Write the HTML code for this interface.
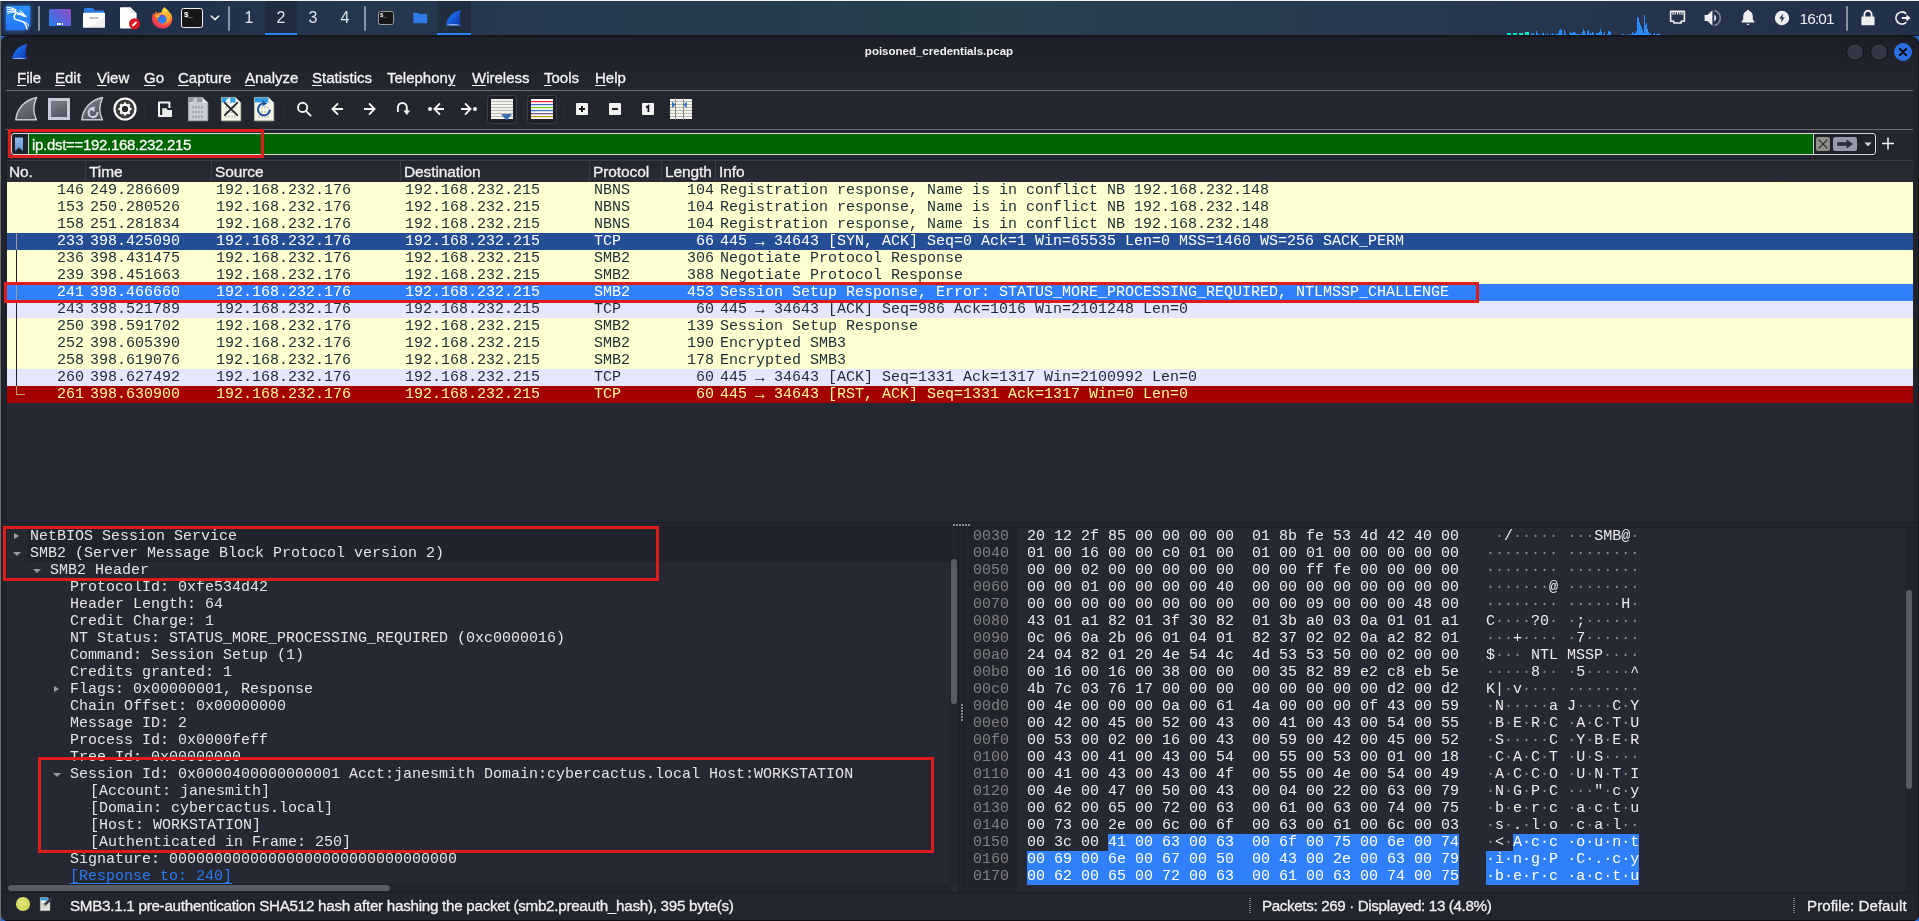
<!DOCTYPE html>
<html><head><meta charset="utf-8"><title>poisoned_credentials.pcap</title>
<style>
*{box-sizing:border-box;margin:0;padding:0}
html,body{width:1919px;height:921px;overflow:hidden;background:#1f212b}
body{position:relative;font-family:"Liberation Sans",sans-serif;color:#e6e6e6;font-size:15px}
.abs{position:absolute}
#topline{position:absolute;left:0;top:0;width:1919px;height:1px;background:#f2f2f2}
#panel{position:absolute;left:0;top:1px;width:1919px;height:34px;background:linear-gradient(90deg,#1f2d48 0%,#263850 24.5%,#253f4b 49.95%,#29424f 50.05%,#27364f 78.7%,#222f49 100%)}
#pshadow{position:absolute;left:0;top:35px;width:1919px;height:2px;background:#14151b}
#leftedge{position:absolute;left:0;top:1px;width:1px;height:920px;background:#6e6e6e}
#win{position:absolute;left:1px;top:37px;width:1917px;height:884px;background:linear-gradient(180deg,#1d1f28 0px,#22242e 40px,#23252f 54px,#23252f 100%)}
#rightedge{position:absolute;left:1918px;top:37px;width:1px;height:884px;background:#14151b}
.ws{position:absolute;top:7px;width:32px;height:22px;line-height:22px;text-align:center;font-size:16px;color:#dfe3ea}
/* title */
#title{position:absolute;left:0;top:37px;width:1878px;height:29px;line-height:29px;text-align:center;font-size:11.5px;font-weight:bold;color:#f2f2f2;letter-spacing:0}
.wb{position:absolute;top:43px;width:18px;height:18px;border-radius:50%;background:#333645;border:1.5px solid #0e0f14}
/* menu */
.mi{position:absolute;top:68px;height:20px;line-height:20px;font-size:15px;color:#f4f4f4;white-space:nowrap;-webkit-text-stroke:0.3px #f4f4f4}
.mi u{text-decoration:underline;text-underline-offset:2px;text-decoration-thickness:1px}
#menuline{position:absolute;left:6px;top:90px;width:1907px;height:1px;background:#6c6e78}
#tbline{position:absolute;left:6px;top:129px;width:1907px;height:1px;background:#6c6e78}
/* filter */
#fbox{position:absolute;left:11px;top:133px;width:1865px;height:22px;border:1px solid #d8d8d8;border-radius:3px;background:#20222c;overflow:hidden}
#fgreen{position:absolute;left:17px;top:0;width:1785px;height:20px;background:#006400;border-right:1px solid #cfcfcf}
#ftext{position:absolute;left:32px;top:135px;height:20px;line-height:20px;font-size:15px;color:#f8f8f8;white-space:nowrap;letter-spacing:-0.3px;-webkit-text-stroke:0.3px #f8f8f8}
/* packet list */
#plhead{position:absolute;left:7px;top:160px;width:1906px;height:22px;background:linear-gradient(#242630,#292b36);border-top:1px solid #3a3c47}
.hc{position:absolute;top:162px;height:20px;line-height:20px;font-size:15.5px;color:#f0f0f0;white-space:nowrap;letter-spacing:-0.1px;-webkit-text-stroke:0.3px #f0f0f0}
.hd{position:absolute;top:161px;width:1px;height:20px;background:#3b3d48}
#plbody{position:absolute;left:7px;top:182px;width:1906px;height:340px;background:#262833}
.pr{position:absolute;left:7px;width:1906px;height:17px;font-family:"Liberation Mono",monospace;font-size:15px;line-height:17px;white-space:pre}
.pr .c{position:absolute;top:0;height:17px}
.pr.y{background:#feffd0;color:#1c2b36}
.pr.t{background:#e7e6ff;color:#1c2b36}
.pr.b{background:#244f97;color:#ffffff}
.pr.s{background:#3080fc;color:#ffffff}
.pr.r{background:#a40000;color:#fffc9c}
.ar{font-family:"Liberation Sans",sans-serif;font-size:16px;display:inline-block;width:9px;text-align:center;line-height:17px;vertical-align:top;position:relative;top:-1.5px;text-indent:-4px}
/* bottom panes */
#split1{position:absolute;left:1px;top:522px;width:1917px;height:6px;background:#22242e;border-top:1px solid #1c1e26;border-bottom:1px solid #1c1e26}
#tree{position:absolute;left:7px;top:528px;width:951px;height:364px;background:#262833;overflow:hidden}
#hexp{position:absolute;left:964px;top:528px;width:949px;height:364px;background:#262833;overflow:hidden}
#hexoff{position:absolute;left:964px;top:528px;width:54px;height:364px;background:#21232d}
.tt{position:absolute;height:17px;line-height:17px;font-family:"Liberation Mono",monospace;font-size:15px;color:#e4e4e4;white-space:pre}
.tt.lnk{color:#2a7bef;text-decoration:underline;text-underline-offset:3px;text-decoration-thickness:1px;text-decoration-skip-ink:none}
.tdk{position:absolute;left:27px;width:931px;height:17px;background:#21232d}
.ar-r{position:absolute;width:0;height:0;border-left:5px solid #a0a0a0;border-top:3.9px solid transparent;border-bottom:3.9px solid transparent;margin-top:-0.4px}
.ar-d{position:absolute;width:0;height:0;border-top:4px solid #9a9a9a;border-left:4px solid transparent;border-right:4px solid transparent}
.hr{position:absolute;left:964px;width:949px;height:17px;font-family:"Liberation Mono",monospace;font-size:15px;line-height:17px;white-space:pre}
.ho{position:absolute;left:9px;color:#808080}
.hb{position:absolute;left:63px;color:#ececec}
.ha{position:absolute;left:522px;color:#ececec}
.d{color:#8e8e8e}
.hs .d{color:#fff}
.hs{background:#3080fc;color:#fff;display:inline-block;height:17px}
.redbox{position:absolute;border:3px solid #e01b1b}
.sb{position:absolute;background:#5b5c63;border-radius:3px}
/* status */
#status{position:absolute;left:1px;top:892px;width:1917px;height:29px;background:#22242e;border-top:1px solid #1b1d24;border-bottom:1px solid #0e0f13}
.st{position:absolute;top:896px;height:20px;line-height:20px;font-size:15.2px;color:#f0f0f0;white-space:nowrap;-webkit-text-stroke:0.3px #f0f0f0}
.vdot{position:absolute;top:898px;width:2px;height:15px;background:repeating-linear-gradient(180deg,#70727a 0 1px,transparent 1px 2px)}
#L{position:absolute;left:0;top:0;width:1919px;height:921px;will-change:transform}
</style></head><body><div id="L">
<div id="topline"></div>
<div id="panel"></div>
<div id="pshadow"></div>
<div id="win"></div>
<div class="abs" style="left:1px;top:92px;width:6px;height:800px;background:#20222c"></div><div class="abs" style="left:1913px;top:92px;width:5px;height:800px;background:#20222c"></div>
<div id="leftedge"></div>
<div id="rightedge"></div>

<!-- PANEL ICONS -->
<!-- kali menu -->
<div class="abs" style="left:6px;top:6px;width:24px;height:24px;border-radius:1px 1px 7px 1px;background:linear-gradient(180deg,#2b93ff,#2377f2);box-shadow:0 0 3.5px 1px rgba(40,130,255,.7)"></div>
<svg class="abs" style="left:6px;top:6px" width="24" height="24" viewBox="0 0 24 24" fill="none" stroke="#fff" stroke-linecap="round">
<path d="M1 1.2 C4 1.4 7 2 9.5 3.6" stroke-width="1.1"/>
<path d="M1.2 3.4 C4 3 6.5 3.4 9.5 4.6" stroke-width="1.1"/>
<path d="M1.4 5.6 C4 4.8 6.5 4.8 9.5 5.4" stroke-width="1.1"/>
<path d="M2 7.4 C4.5 6.2 7 5.8 9.6 6.2" stroke-width="1"/>
<path d="M9.4 3.4 C9.8 5.5 10 6.5 9.8 7.4 C7.6 9.6 7.4 12.4 10 13.6 C13 14.8 17.5 14.6 19.6 18.6 C20.4 20.2 20.8 21.6 21 23" stroke-width="1.5"/>
<path d="M9.8 7.4 C12 6.6 14.6 6.8 16.6 8 L20.4 10.6 L17.8 10.2 C16 8.8 14 8.2 12 8.6" stroke-width="1.1" fill="#fff"/>
<path d="M14 4.4 C15.6 5.4 17 6.6 18 8.2" stroke-width="1"/>
<path d="M17.6 15.6 C20.4 16.4 22.2 18 22.8 20" stroke-width="1"/>
</svg>
<div class="abs" style="left:38px;top:6px;width:2px;height:25px;background:#8a92a4;border-radius:1px"></div>
<!-- show desktop -->
<div class="abs" style="left:49px;top:9px;width:22px;height:17px;border-radius:1.5px;background:linear-gradient(45deg,#2d7dec 10%,#5a63d8 50%,#9350c6 95%)"></div>
<div class="abs" style="left:57px;top:23px;width:1.6px;height:1.6px;background:#fff"></div><div class="abs" style="left:59.3px;top:23px;width:1.6px;height:1.6px;background:#fff"></div><div class="abs" style="left:61.6px;top:23px;width:1.6px;height:1.6px;background:#fff"></div>
<!-- file manager -->
<svg class="abs" style="left:82px;top:7px" width="24" height="22" viewBox="0 0 24 22">
<path d="M2 2.2 Q2 1 3.2 1 H10.4 Q11.4 1 11.8 2 L12.4 3.6 H21 Q22 3.6 22 4.6 V7 H2 Z" fill="#2b7be9"/>
<defs><linearGradient id="fg1" x1="0" y1="0" x2="1" y2="1"><stop offset="0.62" stop-color="#ffffff"/><stop offset="0.63" stop-color="#f1f1f1"/></linearGradient></defs>
<rect x="1" y="5.8" width="22" height="15" rx="0.8" fill="url(#fg1)"/>
<rect x="7" y="10" width="10" height="2" rx="1" fill="#c4c4c4"/>
</svg>
<!-- text editor -->
<svg class="abs" style="left:118px;top:6px" width="24" height="25" viewBox="0 0 24 25">
<defs><linearGradient id="pg1" x1="0" y1="1" x2="1" y2="0"><stop offset="0" stop-color="#f4f4f4"/><stop offset="1" stop-color="#c8c8c8"/></linearGradient></defs>
<path d="M2 2 Q2 1.2 2.8 1.2 H12.4 L18.6 7.4 V21.6 Q18.6 22.4 17.8 22.4 H2.8 Q2 22.4 2 21.6 Z" fill="#ffffff"/>
<path d="M12.4 1.2 L18.6 7.4 H13.4 Q12.4 7.4 12.4 6.4 Z" fill="url(#pg1)"/>
<circle cx="16.6" cy="17.8" r="5.6" fill="#d8191f"/>
<path d="M14 20.4 L14.5 18.6 L17.9 15.2 L19.2 16.5 L15.8 19.9 Z" fill="#fff"/>
</svg>
<!-- firefox -->
<svg class="abs" style="left:150px;top:6px" width="24" height="24" viewBox="0 0 24 24">
<defs>
<radialGradient id="ff1" cx="0.7" cy="0.15" r="0.95"><stop offset="0" stop-color="#ffe24a"/><stop offset="0.35" stop-color="#ffa62a"/><stop offset="0.65" stop-color="#ff5a36"/><stop offset="1" stop-color="#e3256b"/></radialGradient>
<linearGradient id="ff2" x1="0" y1="0" x2="0" y2="1"><stop offset="0" stop-color="#6a4be0"/><stop offset="0.4" stop-color="#2f7bf0"/><stop offset="1" stop-color="#2a86f4"/></linearGradient>
</defs>
<path d="M14.6 1 C15.4 2.6 17.4 3.4 19.2 6 C21.6 7.8 22.6 10.8 22.2 13.8 C21.6 18.8 17.6 22.6 12.4 22.6 C6.6 22.6 2 18.2 2 12.6 C2 10.2 2.6 8.4 3.6 7 C3.6 7.8 4 8.6 4.4 8.8 C4.6 7.4 5.2 6.2 6.4 5.2 C6.4 6 6.8 6.8 7.6 7.2 C8.8 6.4 10.4 6.2 11.6 6.6 C11.6 4.6 12.6 2.4 14.6 1 Z" fill="url(#ff1)"/>
<circle cx="12.2" cy="13.2" r="4.4" fill="url(#ff2)"/>
<path d="M4.8 9.6 C6.4 9 8.4 9.2 10 10.2 C9 10.4 8.2 11 7.8 11.8 C6.8 11.6 5.6 10.8 4.8 9.6 Z" fill="#ffc53a"/>
<path d="M17 4.6 C19.8 7.2 20.8 10.6 19.6 14 C18.6 16.8 16 18.6 13.2 18.8 C16.2 17.6 17.8 14.8 17.2 11.8 C16.8 9.8 15.6 8.6 14 8 C15.6 7.6 16.8 6.2 17 4.6 Z" fill="#ffb02e" opacity="0.85"/>
</svg>
<!-- terminal -->
<div class="abs" style="left:181px;top:8px;width:22px;height:20px;border:1.3px solid #f2f2f2;border-radius:2.5px;background:#161616"></div>
<div class="abs" style="left:184px;top:9.5px;font-size:8px;line-height:10px;font-weight:bold;color:#fff;letter-spacing:-0.4px">$_</div>
<svg class="abs" style="left:210px;top:14px" width="10" height="8" viewBox="0 0 10 8"><path d="M1.2 2 L5 5.6 L8.8 2" fill="none" stroke="#f2f2f2" stroke-width="1.5" stroke-linecap="round" stroke-linejoin="round"/></svg>
<div class="abs" style="left:228px;top:6px;width:2px;height:25px;background:#8a92a4;border-radius:1px"></div>
<!-- workspaces -->
<div class="abs" style="left:265px;top:1px;width:32px;height:34px;background:#1f2b3e"></div>
<div class="abs" style="left:265px;top:33px;width:32px;height:2px;background:#2a84ff"></div>
<div class="ws" style="left:233px">1</div><div class="ws" style="left:265px">2</div><div class="ws" style="left:297px">3</div><div class="ws" style="left:329px">4</div>
<div class="abs" style="left:364px;top:6px;width:2px;height:25px;background:#8a92a4;border-radius:1px"></div>
<!-- tasks -->
<div class="abs" style="left:378px;top:11px;width:16px;height:14px;border:1.2px solid #9a9a9a;border-radius:2.5px;background:#151515"></div>
<div class="abs" style="left:380px;top:12px;font-size:6px;line-height:7px;font-weight:bold;color:#eee">$_</div>
<svg class="abs" style="left:413px;top:12px" width="15" height="12" viewBox="0 0 15 12"><path d="M0.2 1.6 Q0.2 0.8 1 0.8 H5 Q5.6 0.8 6 1.4 L6.4 2 H13.4 Q14.2 2 14.2 2.8 V10.4 Q14.2 11.2 13.4 11.2 H1 Q0.2 11.2 0.2 10.4 Z" fill="#2f7bea"/></svg>
<div class="abs" style="left:437px;top:1px;width:34px;height:34px;background:#1f2d3f"></div>
<div class="abs" style="left:437px;top:33px;width:34px;height:2px;background:#2a84ff"></div>
<svg class="abs" style="left:445px;top:9px" width="18" height="18" viewBox="0 0 18 18">
<defs><linearGradient id="fin1" x1="0" y1="0" x2="1" y2="1"><stop offset="0" stop-color="#2d8cff"/><stop offset="0.55" stop-color="#1658d6"/><stop offset="1" stop-color="#0a2f9c"/></linearGradient></defs>
<path d="M1 16.4 C2.2 9 7 2.6 16.2 1 C14.2 5.6 14 11 16 16.4 Z" fill="url(#fin1)"/>
<path d="M1 16.4 C5 14.6 12 14.8 16 16.4 Z" fill="#9ec0ff" opacity="0.85"/>
</svg>
<!-- cpu graph -->
<svg class="abs" style="left:1506px;top:13px" width="156" height="22" viewBox="0 0 156 22" shape-rendering="crispEdges">
<g fill="#00e6c4"><rect x="1" y="20" width="4" height="2"/><rect x="7" y="20" width="4" height="2"/><rect x="13" y="20" width="4" height="2"/><rect x="19" y="19" width="4" height="3"/></g>
<g fill="#2a8cff">
<rect x="25" y="20" width="1" height="2"/><rect x="26" y="21" width="1" height="1"/><rect x="27" y="20" width="1" height="2"/><rect x="30" y="18" width="1" height="4"/><rect x="31" y="20" width="1" height="2"/><rect x="33" y="21" width="1" height="1"/><rect x="36" y="20" width="1" height="2"/><rect x="37" y="20" width="1" height="2"/><rect x="39" y="21" width="1" height="1"/><rect x="41" y="20" width="1" height="2"/><rect x="44" y="21" width="1" height="1"/><rect x="46" y="20" width="1" height="2"/><rect x="48" y="21" width="1" height="1"/><rect x="50" y="21" width="1" height="1"/><rect x="51" y="21" width="1" height="1"/><rect x="52" y="20" width="1" height="2"/><rect x="53" y="17" width="1" height="5"/><rect x="54" y="16" width="1" height="6"/><rect x="55" y="17" width="1" height="5"/><rect x="56" y="21" width="1" height="1"/><rect x="58" y="17" width="1" height="5"/><rect x="59" y="20" width="1" height="2"/><rect x="63" y="21" width="1" height="1"/><rect x="64" y="19" width="1" height="3"/><rect x="65" y="20" width="1" height="2"/><rect x="66" y="20" width="1" height="2"/><rect x="67" y="19" width="1" height="3"/><rect x="68" y="19" width="1" height="3"/><rect x="69" y="20" width="1" height="2"/><rect x="70" y="21" width="1" height="1"/><rect x="71" y="21" width="1" height="1"/><rect x="72" y="21" width="1" height="1"/><rect x="73" y="21" width="1" height="1"/><rect x="75" y="21" width="1" height="1"/><rect x="76" y="19" width="1" height="3"/><rect x="77" y="16" width="1" height="6"/><rect x="78" y="18" width="1" height="4"/><rect x="79" y="21" width="1" height="1"/><rect x="81" y="18" width="1" height="4"/><rect x="82" y="17" width="1" height="5"/><rect x="83" y="21" width="1" height="1"/><rect x="84" y="20" width="1" height="2"/><rect x="85" y="21" width="1" height="1"/><rect x="86" y="19" width="1" height="3"/><rect x="87" y="20" width="1" height="2"/><rect x="90" y="20" width="1" height="2"/><rect x="91" y="20" width="1" height="2"/><rect x="92" y="20" width="1" height="2"/><rect x="93" y="19" width="1" height="3"/><rect x="94" y="16" width="1" height="6"/><rect x="95" y="19" width="1" height="3"/><rect x="97" y="21" width="1" height="1"/><rect x="98" y="19" width="1" height="3"/><rect x="101" y="21" width="1" height="1"/><rect x="102" y="18" width="1" height="4"/><rect x="103" y="18" width="1" height="4"/><rect x="104" y="19" width="1" height="3"/><rect x="116" y="21" width="1" height="1"/><rect x="117" y="21" width="1" height="1"/><rect x="121" y="21" width="1" height="1"/><rect x="123" y="21" width="1" height="1"/><rect x="125" y="21" width="1" height="1"/><rect x="126" y="19" width="1" height="3"/><rect x="127" y="21" width="1" height="1"/><rect x="128" y="20" width="1" height="2"/><rect x="129" y="20" width="1" height="2"/><rect x="130" y="18" width="1" height="4"/><rect x="131" y="4" width="1" height="18"/><rect x="132" y="5" width="1" height="17"/><rect x="133" y="9" width="1" height="13"/><rect x="134" y="12" width="1" height="10"/><rect x="135" y="14" width="1" height="8"/><rect x="136" y="17" width="1" height="5"/><rect x="137" y="20" width="1" height="2"/><rect x="138" y="2" width="1" height="20"/><rect x="139" y="12" width="1" height="10"/><rect x="140" y="10" width="1" height="12"/><rect x="141" y="16" width="1" height="6"/><rect x="142" y="19" width="1" height="3"/><rect x="143" y="21" width="1" height="1"/><rect x="144" y="20" width="1" height="2"/><rect x="147" y="21" width="1" height="1"/><rect x="148" y="20" width="1" height="2"/><rect x="150" y="21" width="1" height="1"/><rect x="151" y="21" width="1" height="1"/><rect x="152" y="21" width="1" height="1"/><rect x="153" y="20" width="1" height="2"/>
</g>
</svg>
<!-- tray -->
<svg class="abs" style="left:1669px;top:10px" width="17" height="15" viewBox="0 0 17 15"><path d="M1.6 1.4 H15.4 V11.2 H12.2 V13 H4.8 V11.2 H1.6 Z" fill="none" stroke="#efefef" stroke-width="1.6" stroke-linejoin="round"/><path d="M4 2 V5 M6.2 2 V4.4 M8.5 2 V4.4 M10.8 2 V4.4 M13 2 V5" stroke="#efefef" stroke-width="1.1"/></svg>
<svg class="abs" style="left:1703px;top:9px" width="20" height="18" viewBox="0 0 20 18"><path d="M1.6 6 H4.4 L9.4 1.2 V16.8 L4.4 12 H1.6 Z" fill="#efefef"/><path d="M11.2 5.6 A4 4 0 0 1 11.2 12.4 Z" fill="#efefef"/><path d="M11.4 1.6 A7.6 7.6 0 0 1 11.4 16.4" fill="none" stroke="#7f8798" stroke-width="1.6"/></svg>
<svg class="abs" style="left:1740px;top:9px" width="16" height="17" viewBox="0 0 16 17"><path d="M8 0.8 C8.8 0.8 9.2 1.4 9.2 2 C11.6 2.6 12.8 4.8 12.8 7.4 V10.6 L14.6 13 V13.6 H1.4 V13 L3.2 10.6 V7.4 C3.2 4.8 4.4 2.6 6.8 2 C6.8 1.4 7.2 0.8 8 0.8 Z" fill="#efefef"/><path d="M6.4 14.8 H9.6 Q9.2 16 8 16 Q6.8 16 6.4 14.8 Z" fill="#efefef"/></svg>
<svg class="abs" style="left:1774px;top:10px" width="16" height="16" viewBox="0 0 16 16"><circle cx="8" cy="8" r="7.2" fill="#efefef"/><path d="M9.2 3.4 L5.2 8.6 H7.6 L6.8 12.6 L10.8 7.4 H8.4 Z" fill="#26344f"/></svg>
<div class="abs" style="left:1799.5px;top:7.5px;height:22px;line-height:22px;font-size:15.4px;color:#eef0f4;letter-spacing:-0.85px;white-space:nowrap">16:01</div>
<div class="abs" style="left:1846px;top:6px;width:2px;height:25px;background:#8a92a4;border-radius:1px"></div>
<svg class="abs" style="left:1860px;top:9px" width="16" height="17" viewBox="0 0 16 17"><path d="M4.4 8 V5.4 A3.6 3.6 0 0 1 11.6 5.4 V8" fill="none" stroke="#efefef" stroke-width="1.9"/><rect x="1.4" y="7.6" width="13.2" height="8.6" rx="0.8" fill="#efefef"/></svg>
<svg class="abs" style="left:1895px;top:10px" width="17" height="16" viewBox="0 0 17 16"><path d="M10.6 3.2 A6 6 0 1 0 10.6 12.8" fill="none" stroke="#efefef" stroke-width="1.8" stroke-linecap="round"/><path d="M6.8 6.9 H11.4 V4.4 L15.6 8 L11.4 11.6 V9.1 H6.8 Z" fill="#efefef"/></svg>


<!-- title -->
<div id="title">poisoned_credentials.pcap</div>
<div class="wb" style="left:1846px"></div>
<div class="wb" style="left:1870px"></div>
<div class="wb" style="left:1894px;background:#2a6fe3;border-color:#2a6fe3"></div>
<svg class="abs" style="left:1897px;top:46px" width="12" height="12" viewBox="0 0 12 12"><path d="M2.9 2.9 L9.1 9.1 M9.1 2.9 L2.9 9.1" stroke="#08090c" stroke-width="2.1" stroke-linecap="round"/></svg>

<!-- menu -->
<div class="mi" style="left:17px"><u>F</u>ile</div>
<div class="mi" style="left:55px"><u>E</u>dit</div>
<div class="mi" style="left:97px"><u>V</u>iew</div>
<div class="mi" style="left:144px"><u>G</u>o</div>
<div class="mi" style="left:178px"><u>C</u>apture</div>
<div class="mi" style="left:245px"><u>A</u>nalyze</div>
<div class="mi" style="left:312px"><u>S</u>tatistics</div>
<div class="mi" style="left:387px">Telephon<u>y</u></div>
<div class="mi" style="left:472px"><u>W</u>ireless</div>
<div class="mi" style="left:544px"><u>T</u>ools</div>
<div class="mi" style="left:595px"><u>H</u>elp</div>
<div id="menuline"></div>

<!-- TOOLBAR -->
<svg class="abs" style="left:0;top:92px" width="720" height="36" viewBox="0 92 720 36">
<defs>
<linearGradient id="tg1" x1="0" y1="0" x2="0.4" y2="1"><stop offset="0" stop-color="#80838e"/><stop offset="1" stop-color="#555862"/></linearGradient>
<linearGradient id="tg2" x1="0" y1="0" x2="0" y2="1"><stop offset="0" stop-color="#9a9ca8"/><stop offset="1" stop-color="#8e909c"/></linearGradient>
</defs>
<!-- start capture fin -->
<path d="M15.8 119.8 C17 109 24 100 36.6 97.4 C33.2 104.6 32.8 112.6 36.4 119.8 Z" fill="url(#tg1)" stroke="#c6c9d5" stroke-width="1.5" stroke-linejoin="round"/>
<!-- stop -->
<rect x="49.5" y="99.5" width="19" height="19" fill="url(#tg1)" stroke="#c9ccd8" stroke-width="3"/>
<!-- restart fin -->
<path d="M81.8 119.8 C83 109 90 100 102.6 97.4 C99.2 104.6 98.8 112.6 102.4 119.8 Z" fill="url(#tg1)" stroke="#c6c9d5" stroke-width="1.5" stroke-linejoin="round"/>
<path d="M92.4 108.4 A4.4 4.4 0 1 0 97.4 112.2" fill="none" stroke="#cfd2de" stroke-width="2.1"/>
<path d="M88.6 108.6 L94.8 106.2 L94.4 112 Z" fill="#cfd2de"/>
<!-- options -->
<circle cx="125" cy="109" r="10.5" fill="#3d3d3d" stroke="#fbfbfb" stroke-width="2.2"/>
<circle cx="125" cy="109" r="4.3" fill="none" stroke="#fbfbfb" stroke-width="2.4"/>
<g stroke="#fbfbfb" stroke-width="2.1"><path d="M125 102.4 V104.6 M125 113.4 V115.6 M118.4 109 H120.6 M129.4 109 H131.6 M120.35 104.35 L121.9 105.9 M128.1 112.1 L129.65 113.65 M120.35 113.65 L121.9 112.1 M128.1 105.9 L129.65 104.35"/></g>
<circle cx="125" cy="109" r="3" fill="#2c2c2c"/>
<!-- sep -->
<rect x="144" y="99" width="1" height="20" fill="#2a2c37"/>
<!-- open -->
<path d="M163 116 H159 V102.6 H169.4 V108" fill="none" stroke="#f4f4f4" stroke-width="2" stroke-linejoin="round"/>
<path d="M162.2 108.2 H166.6 L167.6 110 H172 V117 H162.2 Z" fill="#ececec"/>
<!-- save -->
<path d="M188.4 97.4 H202.4 L207.8 102.8 V120.8 H188.4 Z" fill="#caccd8" stroke="#a9abb7" stroke-width="0.8"/>
<path d="M188.8 97.8 H202.2 L205.6 101.2 V101.8 H188.8 Z" fill="url(#tg2)"/>
<path d="M192.6 101.8 Q193 98.6 196.4 97.8 H197 V101.8 Z" fill="#caccd8"/>
<path d="M202.4 97.4 V102.8 H207.8 Z" fill="#e2e4ec"/>
<g stroke="#9a9ca8" stroke-width="2.2" stroke-dasharray="1.6 1.3"><path d="M192.4 107.4 H204.0"/><path d="M192.4 112.0 H204.0"/><path d="M192.4 116.6 H204.0"/></g>
<!-- close -->
<path d="M221.4 97.4 H235.4 L240.8 102.8 V120.8 H221.4 Z" fill="#f6f6e8" stroke="#b9b9a8" stroke-width="0.8"/>
<path d="M221.8 97.8 H235.2 L239.6 102.2 V102.4 H221.8 Z" fill="#2e9fe6"/>
<path d="M225.6 102.4 Q226 99 229.6 98 H230.2 V102.4 Z" fill="#f6f6e8"/>
<path d="M235.4 97.4 V102.8 H240.8 Z" fill="#ecece0"/>
<g stroke="#c2c3c0" stroke-width="2.2" stroke-dasharray="1.6 1.3"><path d="M225.4 107.4 H237.0"/><path d="M225.4 112.0 H237.0"/><path d="M225.4 116.6 H237.0"/></g>
<path d="M224.8 102.8 L237.2 115.2 M237.2 102.8 L224.8 115.2" stroke="#2a2c30" stroke-width="1.9" stroke-linecap="round"/>
<!-- reload -->
<path d="M254.4 97.4 H268.4 L273.8 102.8 V120.8 H254.4 Z" fill="#f6f6e8" stroke="#b9b9a8" stroke-width="0.8"/>
<path d="M254.8 97.8 H268.2 L272.6 102.2 V102.4 H254.8 Z" fill="#2e9fe6"/>
<path d="M268.4 97.4 V102.8 H273.8 Z" fill="#ecece0"/>
<g stroke="#c2c3c0" stroke-width="2.2" stroke-dasharray="1.6 1.3"><path d="M258.4 107.4 H270.0"/><path d="M258.4 112.0 H270.0"/><path d="M258.4 116.6 H270.0"/></g>
<path d="M263.4 103.4 A6 6 0 1 0 270 109.6" fill="none" stroke="#1d4d9e" stroke-width="1.9"/>
<path d="M262.6 100.6 L267.2 103.4 L262.6 106.2 Z" fill="#1d4d9e"/>
<!-- sep -->
<rect x="283" y="99" width="1" height="20" fill="#2a2c37"/>
<!-- find -->
<circle cx="302.6" cy="107.4" r="4.6" fill="none" stroke="#f4f4f4" stroke-width="1.9"/>
<path d="M306 111 L310.6 115.6" stroke="#f4f4f4" stroke-width="1.9" stroke-linecap="round"/>
<!-- back / fwd -->
<g fill="none" stroke="#f4f4f4" stroke-width="1.9" stroke-linecap="butt" stroke-linejoin="miter">
<path d="M343 109 H332.6 M338 103.4 L332.4 109 L338 114.6"/>
<path d="M364 109 H374.4 M369 103.4 L374.6 109 L369 114.6"/>
<!-- jump -->
<path d="M397.9 112 V107.4 A4.45 4.45 0 0 1 406.8 107.4 V111"/>
</g>
<path d="M403.4 110.4 H410.2 L406.8 114.9 Z" fill="#f4f4f4"/>
<!-- first / last -->
<circle cx="430" cy="109" r="2" fill="#f4f4f4"/>
<circle cx="475" cy="109" r="2" fill="#f4f4f4"/>
<g fill="none" stroke="#f4f4f4" stroke-width="1.9">
<path d="M444 109 H434.6 M440 103.4 L434.4 109 L440 114.6"/>
<path d="M461 109 H470.4 M465 103.4 L470.6 109 L465 114.6"/>
</g>
<!-- autoscroll button -->
<rect x="487.5" y="95.5" width="29" height="28" rx="3" fill="#1e2029" stroke="#3d404c" stroke-width="1"/>
<rect x="491" y="99" width="22" height="20" fill="#f4f4f0"/>
<g stroke="#b9b9ad" stroke-width="1"><path d="M491 101.5 H513 M491 104.5 H513 M491 107.5 H513 M491 110.5 H513 M491 113.5 H513 M491 116.5 H513"/></g>
<path d="M501.2 114.6 Q501 114 502 114 H511 Q512 114 511.6 114.8 L507.4 119.6 Q506.6 120.4 505.8 119.6 Z" fill="#3a72bc"/>
<rect x="523" y="99" width="1" height="20" fill="#2a2c37"/>
<!-- colorize button -->
<rect x="527.5" y="95.5" width="29" height="28" rx="3" fill="#1e2029" stroke="#3d404c" stroke-width="1"/>
<rect x="531" y="99" width="22" height="20" fill="#fbf8fb"/>
<g stroke-width="1.2"><path d="M531 101.6 H553" stroke="#ef2929"/><path d="M531 104.6 H553" stroke="#3a6fc0"/><path d="M531 107.6 H553" stroke="#73d216"/><path d="M531 110.6 H553" stroke="#3a6fc0"/><path d="M531 113.6 H553" stroke="#75507b"/><path d="M531 116.6 H553" stroke="#c4a000"/></g>
<rect x="563" y="99" width="1" height="20" fill="#2a2c37"/>
<!-- zoom in/out/1 -->
<rect x="576" y="103" width="12" height="12" rx="1" fill="#f2f2f2"/>
<path d="M579 109 H585 M582 106 V112" stroke="#15161b" stroke-width="1.9"/>
<rect x="609" y="103" width="12" height="12" rx="1" fill="#f2f2f2"/>
<path d="M612 109 H618" stroke="#15161b" stroke-width="1.9"/>
<rect x="642" y="103" width="12" height="12" rx="1" fill="#f2f2f2"/>
<path d="M646 107.6 L648.4 106 V112" fill="none" stroke="#15161b" stroke-width="1.8"/>
<!-- resize columns -->
<rect x="670" y="99" width="22" height="20" fill="#f4f4f0"/>
<g stroke="#b9b9ad" stroke-width="1"><path d="M670 101.5 H692 M670 104.5 H692 M670 107.5 H692 M670 110.5 H692 M670 113.5 H692 M670 116.5 H692"/></g>
<path d="M675.5 98 V120 M683.5 98 V120" stroke="#8a8a80" stroke-width="1"/>
<path d="M672 101.6 L675.6 104.8 L672 108 Z" fill="#3a72bc"/>
<path d="M686.8 101.6 L683.2 104.8 L686.8 108 Z" fill="#3a72bc"/>
</svg>
<!-- title icon -->
<svg class="abs" style="left:11px;top:43px" width="18" height="18" viewBox="0 0 18 18">
<defs><linearGradient id="fin2" x1="0" y1="0" x2="1" y2="1"><stop offset="0" stop-color="#2d8cff"/><stop offset="0.55" stop-color="#1658d6"/><stop offset="1" stop-color="#0a2f9c"/></linearGradient></defs>
<path d="M1 16 C2.2 9 7 2.6 16.4 1 C14.4 5.6 14.2 10.6 16 16 Z" fill="url(#fin2)"/>
<path d="M1 16 C5 14.2 12 14.4 16 16 Z" fill="#9ec0ff" opacity="0.85"/>
</svg>

<div id="tbline"></div>

<!-- filter -->
<div id="fbox"><div id="fgreen"></div></div>
<div id="ftext">ip.dst==192.168.232.215</div>
<!-- bookmark -->
<svg class="abs" style="left:14px;top:137px" width="10" height="15" viewBox="0 0 10 15"><defs><linearGradient id="bk1" x1="0" y1="0" x2="0" y2="1"><stop offset="0" stop-color="#8fb8e6"/><stop offset="1" stop-color="#6296d4"/></linearGradient></defs><path d="M1 0.6 H9 V14 L5 10.6 L1 14 Z" fill="url(#bk1)"/></svg>
<div class="abs" style="left:28px;top:134px;width:1px;height:20px;background:#d0d0d0"></div>
<!-- clear -->
<div class="abs" style="left:1816px;top:137px;width:14px;height:14px;border-radius:2px;background:#8f9089"></div>
<svg class="abs" style="left:1816px;top:137px" width="14" height="14" viewBox="0 0 14 14"><path d="M2.6 2.6 L11.4 11.4 M11.4 2.6 L2.6 11.4" stroke="#2a2c30" stroke-width="1.2"/></svg>
<!-- apply -->
<div class="abs" style="left:1833px;top:137px;width:24px;height:14px;border-radius:2.5px;background:#969aa8"></div>
<svg class="abs" style="left:1833px;top:137px" width="24" height="14" viewBox="0 0 24 14"><path d="M4.2 5.2 H13.6 V2.6 L20 7 L13.6 11.4 V8.8 H4.2 Z" fill="#2a2c36"/></svg>
<svg class="abs" style="left:1864px;top:142px" width="8" height="5" viewBox="0 0 8 5"><path d="M0.4 0.4 H7.6 L4 4.4 Z" fill="#d4d4d4"/></svg>
<!-- plus -->
<svg class="abs" style="left:1881px;top:136.5px" width="14" height="14" viewBox="0 0 14 14"><path d="M1 6.4 H13 M7 0.4 V12.4" stroke="#f6f6f6" stroke-width="1.5"/></svg>


<!-- packet list -->
<div id="plhead"></div>
<div class="hc" style="left:9px">No.</div>
<div class="hc" style="left:89px">Time</div>
<div class="hc" style="left:215px">Source</div>
<div class="hc" style="left:404px">Destination</div>
<div class="hc" style="left:593px">Protocol</div>
<div class="hc" style="left:665px">Length</div>
<div class="hc" style="left:719px">Info</div>
<div class="hd" style="left:85px"></div><div class="hd" style="left:211px"></div><div class="hd" style="left:400px"></div><div class="hd" style="left:589px"></div><div class="hd" style="left:661px"></div><div class="hd" style="left:715px"></div>
<div id="plbody"></div>
<div class="pr y" style="top:182px"><span class="c" style="left:0;width:77px;text-align:right">146</span><span class="c" style="left:83px">249.286609</span><span class="c" style="left:209px">192.168.232.176</span><span class="c" style="left:398px">192.168.232.215</span><span class="c" style="left:587px">NBNS</span><span class="c" style="left:660px;width:47px;text-align:right">104</span><span class="c" style="left:713px">Registration response, Name is in conflict NB 192.168.232.148</span></div>
<div class="pr y" style="top:199px"><span class="c" style="left:0;width:77px;text-align:right">153</span><span class="c" style="left:83px">250.280526</span><span class="c" style="left:209px">192.168.232.176</span><span class="c" style="left:398px">192.168.232.215</span><span class="c" style="left:587px">NBNS</span><span class="c" style="left:660px;width:47px;text-align:right">104</span><span class="c" style="left:713px">Registration response, Name is in conflict NB 192.168.232.148</span></div>
<div class="pr y" style="top:216px"><span class="c" style="left:0;width:77px;text-align:right">158</span><span class="c" style="left:83px">251.281834</span><span class="c" style="left:209px">192.168.232.176</span><span class="c" style="left:398px">192.168.232.215</span><span class="c" style="left:587px">NBNS</span><span class="c" style="left:660px;width:47px;text-align:right">104</span><span class="c" style="left:713px">Registration response, Name is in conflict NB 192.168.232.148</span></div>
<div class="pr b" style="top:233px"><span class="c" style="left:0;width:77px;text-align:right">233</span><span class="c" style="left:83px">398.425090</span><span class="c" style="left:209px">192.168.232.176</span><span class="c" style="left:398px">192.168.232.215</span><span class="c" style="left:587px">TCP</span><span class="c" style="left:660px;width:47px;text-align:right">66</span><span class="c" style="left:713px">445 <span class="ar">→</span> 34643 [SYN, ACK] Seq=0 Ack=1 Win=65535 Len=0 MSS=1460 WS=256 SACK_PERM</span></div>
<div class="pr y" style="top:250px"><span class="c" style="left:0;width:77px;text-align:right">236</span><span class="c" style="left:83px">398.431475</span><span class="c" style="left:209px">192.168.232.176</span><span class="c" style="left:398px">192.168.232.215</span><span class="c" style="left:587px">SMB2</span><span class="c" style="left:660px;width:47px;text-align:right">306</span><span class="c" style="left:713px">Negotiate Protocol Response</span></div>
<div class="pr y" style="top:267px"><span class="c" style="left:0;width:77px;text-align:right">239</span><span class="c" style="left:83px">398.451663</span><span class="c" style="left:209px">192.168.232.176</span><span class="c" style="left:398px">192.168.232.215</span><span class="c" style="left:587px">SMB2</span><span class="c" style="left:660px;width:47px;text-align:right">388</span><span class="c" style="left:713px">Negotiate Protocol Response</span></div>
<div class="pr s" style="top:284px"><span class="c" style="left:0;width:77px;text-align:right">241</span><span class="c" style="left:83px">398.466660</span><span class="c" style="left:209px">192.168.232.176</span><span class="c" style="left:398px">192.168.232.215</span><span class="c" style="left:587px">SMB2</span><span class="c" style="left:660px;width:47px;text-align:right">453</span><span class="c" style="left:713px">Session Setup Response, Error: STATUS_MORE_PROCESSING_REQUIRED, NTLMSSP_CHALLENGE</span></div>
<div class="pr t" style="top:301px"><span class="c" style="left:0;width:77px;text-align:right">243</span><span class="c" style="left:83px">398.521789</span><span class="c" style="left:209px">192.168.232.176</span><span class="c" style="left:398px">192.168.232.215</span><span class="c" style="left:587px">TCP</span><span class="c" style="left:660px;width:47px;text-align:right">60</span><span class="c" style="left:713px">445 <span class="ar">→</span> 34643 [ACK] Seq=986 Ack=1016 Win=2101248 Len=0</span></div>
<div class="pr y" style="top:318px"><span class="c" style="left:0;width:77px;text-align:right">250</span><span class="c" style="left:83px">398.591702</span><span class="c" style="left:209px">192.168.232.176</span><span class="c" style="left:398px">192.168.232.215</span><span class="c" style="left:587px">SMB2</span><span class="c" style="left:660px;width:47px;text-align:right">139</span><span class="c" style="left:713px">Session Setup Response</span></div>
<div class="pr y" style="top:335px"><span class="c" style="left:0;width:77px;text-align:right">252</span><span class="c" style="left:83px">398.605390</span><span class="c" style="left:209px">192.168.232.176</span><span class="c" style="left:398px">192.168.232.215</span><span class="c" style="left:587px">SMB2</span><span class="c" style="left:660px;width:47px;text-align:right">190</span><span class="c" style="left:713px">Encrypted SMB3</span></div>
<div class="pr y" style="top:352px"><span class="c" style="left:0;width:77px;text-align:right">258</span><span class="c" style="left:83px">398.619076</span><span class="c" style="left:209px">192.168.232.176</span><span class="c" style="left:398px">192.168.232.215</span><span class="c" style="left:587px">SMB2</span><span class="c" style="left:660px;width:47px;text-align:right">178</span><span class="c" style="left:713px">Encrypted SMB3</span></div>
<div class="pr t" style="top:369px"><span class="c" style="left:0;width:77px;text-align:right">260</span><span class="c" style="left:83px">398.627492</span><span class="c" style="left:209px">192.168.232.176</span><span class="c" style="left:398px">192.168.232.215</span><span class="c" style="left:587px">TCP</span><span class="c" style="left:660px;width:47px;text-align:right">60</span><span class="c" style="left:713px">445 <span class="ar">→</span> 34643 [ACK] Seq=1331 Ack=1317 Win=2100992 Len=0</span></div>
<div class="pr r" style="top:386px"><span class="c" style="left:0;width:77px;text-align:right">261</span><span class="c" style="left:83px">398.630900</span><span class="c" style="left:209px">192.168.232.176</span><span class="c" style="left:398px">192.168.232.215</span><span class="c" style="left:587px">TCP</span><span class="c" style="left:660px;width:47px;text-align:right">60</span><span class="c" style="left:713px">445 <span class="ar">→</span> 34643 [RST, ACK] Seq=1331 Ack=1317 Win=0 Len=0</span></div>
<!-- related packet connector -->
<div class="abs" style="left:16px;top:233px;width:1px;height:153px;background:#1c2030"></div>
<div class="abs" style="left:16px;top:233px;width:1px;height:17px;background:#9a9a9a"></div>
<div class="abs" style="left:16px;top:284px;width:1px;height:17px;background:#9a9a9a"></div>
<div class="abs" style="left:16px;top:386px;width:1px;height:9px;background:#c8a060"></div>
<div class="abs" style="left:16px;top:394px;width:9px;height:1px;background:#c8a060"></div>

<div id="split1"></div>
<div class="abs" style="left:953px;top:524px;width:17px;height:2px;background:repeating-linear-gradient(90deg,#8a8b92 0 2px,transparent 2px 3px)"></div>
<div id="tree"></div>
<div id="hexp"></div>
<div id="hexoff"></div>
<div class="abs" style="left:958px;top:528px;width:6px;height:364px;background:#20222c"></div>
<div class="abs" style="left:958px;top:528px;width:1px;height:364px;background:#1a1c23"></div><div class="abs" style="left:963px;top:528px;width:1px;height:364px;background:#1a1c23"></div>
<div class="abs" style="left:950px;top:562px;width:8px;height:323px;background:#23252f"></div>
<div class="abs" style="left:961px;top:704px;width:2px;height:17px;background:repeating-linear-gradient(180deg,#8a8b92 0 2px,transparent 2px 3px)"></div>
<div class="tdk" style="top:528px"></div><div class="ar-r" style="left:14px;top:533px"></div><div class="tt" style="left:30px;top:528px">NetBIOS Session Service</div>
<div class="tdk" style="top:545px"></div><div class="ar-d" style="left:13px;top:552px"></div><div class="tt" style="left:30px;top:545px">SMB2 (Server Message Block Protocol version 2)</div>
<div class="ar-d" style="left:33px;top:569px"></div><div class="tt" style="left:50px;top:562px">SMB2 Header</div>
<div class="tt" style="left:70px;top:579px">ProtocolId: 0xfe534d42</div>
<div class="tt" style="left:70px;top:596px">Header Length: 64</div>
<div class="tt" style="left:70px;top:613px">Credit Charge: 1</div>
<div class="tt" style="left:70px;top:630px">NT Status: STATUS_MORE_PROCESSING_REQUIRED (0xc0000016)</div>
<div class="tt" style="left:70px;top:647px">Command: Session Setup (1)</div>
<div class="tt" style="left:70px;top:664px">Credits granted: 1</div>
<div class="ar-r" style="left:54px;top:686px"></div><div class="tt" style="left:70px;top:681px">Flags: 0x00000001, Response</div>
<div class="tt" style="left:70px;top:698px">Chain Offset: 0x00000000</div>
<div class="tt" style="left:70px;top:715px">Message ID: 2</div>
<div class="tt" style="left:70px;top:732px">Process Id: 0x0000feff</div>
<div class="tt" style="left:70px;top:749px">Tree Id: 0x00000000</div>
<div class="ar-d" style="left:53px;top:773px"></div><div class="tt" style="left:70px;top:766px">Session Id: 0x0000400000000001 Acct:janesmith Domain:cybercactus.local Host:WORKSTATION</div>
<div class="tt" style="left:90px;top:783px">[Account: janesmith]</div>
<div class="tt" style="left:90px;top:800px">[Domain: cybercactus.local]</div>
<div class="tt" style="left:90px;top:817px">[Host: WORKSTATION]</div>
<div class="tt" style="left:90px;top:834px">[Authenticated in Frame: 250]</div>
<div class="tt" style="left:70px;top:851px">Signature: 00000000000000000000000000000000</div>
<div class="tt lnk" style="left:70px;top:868px">[Response to: 240]</div>
<div class="hr" style="top:528px"><span class="ho">0030</span><span class="hb">20 12 2f 85 00 00 00 00  01 8b fe 53 4d 42 40 00</span><span class="ha"> <span class="d">·</span>/<span class="d">·</span><span class="d">·</span><span class="d">·</span><span class="d">·</span><span class="d">·</span> <span class="d">·</span><span class="d">·</span><span class="d">·</span>SMB@<span class="d">·</span></span></div>
<div class="hr" style="top:545px"><span class="ho">0040</span><span class="hb">01 00 16 00 00 c0 01 00  01 00 01 00 00 00 00 00</span><span class="ha"><span class="d">·</span><span class="d">·</span><span class="d">·</span><span class="d">·</span><span class="d">·</span><span class="d">·</span><span class="d">·</span><span class="d">·</span> <span class="d">·</span><span class="d">·</span><span class="d">·</span><span class="d">·</span><span class="d">·</span><span class="d">·</span><span class="d">·</span><span class="d">·</span></span></div>
<div class="hr" style="top:562px"><span class="ho">0050</span><span class="hb">00 00 02 00 00 00 00 00  00 00 ff fe 00 00 00 00</span><span class="ha"><span class="d">·</span><span class="d">·</span><span class="d">·</span><span class="d">·</span><span class="d">·</span><span class="d">·</span><span class="d">·</span><span class="d">·</span> <span class="d">·</span><span class="d">·</span><span class="d">·</span><span class="d">·</span><span class="d">·</span><span class="d">·</span><span class="d">·</span><span class="d">·</span></span></div>
<div class="hr" style="top:579px"><span class="ho">0060</span><span class="hb">00 00 01 00 00 00 00 40  00 00 00 00 00 00 00 00</span><span class="ha"><span class="d">·</span><span class="d">·</span><span class="d">·</span><span class="d">·</span><span class="d">·</span><span class="d">·</span><span class="d">·</span>@ <span class="d">·</span><span class="d">·</span><span class="d">·</span><span class="d">·</span><span class="d">·</span><span class="d">·</span><span class="d">·</span><span class="d">·</span></span></div>
<div class="hr" style="top:596px"><span class="ho">0070</span><span class="hb">00 00 00 00 00 00 00 00  00 00 09 00 00 00 48 00</span><span class="ha"><span class="d">·</span><span class="d">·</span><span class="d">·</span><span class="d">·</span><span class="d">·</span><span class="d">·</span><span class="d">·</span><span class="d">·</span> <span class="d">·</span><span class="d">·</span><span class="d">·</span><span class="d">·</span><span class="d">·</span><span class="d">·</span>H<span class="d">·</span></span></div>
<div class="hr" style="top:613px"><span class="ho">0080</span><span class="hb">43 01 a1 82 01 3f 30 82  01 3b a0 03 0a 01 01 a1</span><span class="ha">C<span class="d">·</span><span class="d">·</span><span class="d">·</span><span class="d">·</span>?0<span class="d">·</span> <span class="d">·</span>;<span class="d">·</span><span class="d">·</span><span class="d">·</span><span class="d">·</span><span class="d">·</span><span class="d">·</span></span></div>
<div class="hr" style="top:630px"><span class="ho">0090</span><span class="hb">0c 06 0a 2b 06 01 04 01  82 37 02 02 0a a2 82 01</span><span class="ha"><span class="d">·</span><span class="d">·</span><span class="d">·</span>+<span class="d">·</span><span class="d">·</span><span class="d">·</span><span class="d">·</span> <span class="d">·</span>7<span class="d">·</span><span class="d">·</span><span class="d">·</span><span class="d">·</span><span class="d">·</span><span class="d">·</span></span></div>
<div class="hr" style="top:647px"><span class="ho">00a0</span><span class="hb">24 04 82 01 20 4e 54 4c  4d 53 53 50 00 02 00 00</span><span class="ha">$<span class="d">·</span><span class="d">·</span><span class="d">·</span> NTL MSSP<span class="d">·</span><span class="d">·</span><span class="d">·</span><span class="d">·</span></span></div>
<div class="hr" style="top:664px"><span class="ho">00b0</span><span class="hb">00 16 00 16 00 38 00 00  00 35 82 89 e2 c8 eb 5e</span><span class="ha"><span class="d">·</span><span class="d">·</span><span class="d">·</span><span class="d">·</span><span class="d">·</span>8<span class="d">·</span><span class="d">·</span> <span class="d">·</span>5<span class="d">·</span><span class="d">·</span><span class="d">·</span><span class="d">·</span><span class="d">·</span>^</span></div>
<div class="hr" style="top:681px"><span class="ho">00c0</span><span class="hb">4b 7c 03 76 17 00 00 00  00 00 00 00 00 d2 00 d2</span><span class="ha">K|<span class="d">·</span>v<span class="d">·</span><span class="d">·</span><span class="d">·</span><span class="d">·</span> <span class="d">·</span><span class="d">·</span><span class="d">·</span><span class="d">·</span><span class="d">·</span><span class="d">·</span><span class="d">·</span><span class="d">·</span></span></div>
<div class="hr" style="top:698px"><span class="ho">00d0</span><span class="hb">00 4e 00 00 00 0a 00 61  4a 00 00 00 0f 43 00 59</span><span class="ha"><span class="d">·</span>N<span class="d">·</span><span class="d">·</span><span class="d">·</span><span class="d">·</span><span class="d">·</span>a J<span class="d">·</span><span class="d">·</span><span class="d">·</span><span class="d">·</span>C<span class="d">·</span>Y</span></div>
<div class="hr" style="top:715px"><span class="ho">00e0</span><span class="hb">00 42 00 45 00 52 00 43  00 41 00 43 00 54 00 55</span><span class="ha"><span class="d">·</span>B<span class="d">·</span>E<span class="d">·</span>R<span class="d">·</span>C <span class="d">·</span>A<span class="d">·</span>C<span class="d">·</span>T<span class="d">·</span>U</span></div>
<div class="hr" style="top:732px"><span class="ho">00f0</span><span class="hb">00 53 00 02 00 16 00 43  00 59 00 42 00 45 00 52</span><span class="ha"><span class="d">·</span>S<span class="d">·</span><span class="d">·</span><span class="d">·</span><span class="d">·</span><span class="d">·</span>C <span class="d">·</span>Y<span class="d">·</span>B<span class="d">·</span>E<span class="d">·</span>R</span></div>
<div class="hr" style="top:749px"><span class="ho">0100</span><span class="hb">00 43 00 41 00 43 00 54  00 55 00 53 00 01 00 18</span><span class="ha"><span class="d">·</span>C<span class="d">·</span>A<span class="d">·</span>C<span class="d">·</span>T <span class="d">·</span>U<span class="d">·</span>S<span class="d">·</span><span class="d">·</span><span class="d">·</span><span class="d">·</span></span></div>
<div class="hr" style="top:766px"><span class="ho">0110</span><span class="hb">00 41 00 43 00 43 00 4f  00 55 00 4e 00 54 00 49</span><span class="ha"><span class="d">·</span>A<span class="d">·</span>C<span class="d">·</span>C<span class="d">·</span>O <span class="d">·</span>U<span class="d">·</span>N<span class="d">·</span>T<span class="d">·</span>I</span></div>
<div class="hr" style="top:783px"><span class="ho">0120</span><span class="hb">00 4e 00 47 00 50 00 43  00 04 00 22 00 63 00 79</span><span class="ha"><span class="d">·</span>N<span class="d">·</span>G<span class="d">·</span>P<span class="d">·</span>C <span class="d">·</span><span class="d">·</span><span class="d">·</span>"<span class="d">·</span>c<span class="d">·</span>y</span></div>
<div class="hr" style="top:800px"><span class="ho">0130</span><span class="hb">00 62 00 65 00 72 00 63  00 61 00 63 00 74 00 75</span><span class="ha"><span class="d">·</span>b<span class="d">·</span>e<span class="d">·</span>r<span class="d">·</span>c <span class="d">·</span>a<span class="d">·</span>c<span class="d">·</span>t<span class="d">·</span>u</span></div>
<div class="hr" style="top:817px"><span class="ho">0140</span><span class="hb">00 73 00 2e 00 6c 00 6f  00 63 00 61 00 6c 00 03</span><span class="ha"><span class="d">·</span>s<span class="d">·</span>.<span class="d">·</span>l<span class="d">·</span>o <span class="d">·</span>c<span class="d">·</span>a<span class="d">·</span>l<span class="d">·</span><span class="d">·</span></span></div>
<div class="hr" style="top:834px"><span class="ho">0150</span><span class="hb">00 3c 00 <span class="hs">41 00 63 00 63  00 6f 00 75 00 6e 00 74</span></span><span class="ha"><span class="d">·</span>&lt;<span class="d">·</span><span class="hs">A<span class="d">·</span>c<span class="d">·</span>c <span class="d">·</span>o<span class="d">·</span>u<span class="d">·</span>n<span class="d">·</span>t</span></span></div>
<div class="hr" style="top:851px"><span class="ho">0160</span><span class="hb"><span class="hs">00 69 00 6e 00 67 00 50  00 43 00 2e 00 63 00 79</span></span><span class="ha"><span class="hs"><span class="d">·</span>i<span class="d">·</span>n<span class="d">·</span>g<span class="d">·</span>P <span class="d">·</span>C<span class="d">·</span>.<span class="d">·</span>c<span class="d">·</span>y</span></span></div>
<div class="hr" style="top:868px"><span class="ho">0170</span><span class="hb"><span class="hs">00 62 00 65 00 72 00 63  00 61 00 63 00 74 00 75</span></span><span class="ha"><span class="hs"><span class="d">·</span>b<span class="d">·</span>e<span class="d">·</span>r<span class="d">·</span>c <span class="d">·</span>a<span class="d">·</span>c<span class="d">·</span>t<span class="d">·</span>u</span></span></div>
<!-- scrollbars -->
<div class="sb" style="left:951px;top:559px;width:6px;height:145px"></div>
<div class="abs" style="left:7px;top:884px;width:943px;height:8px;background:#21232d"></div>
<div class="sb" style="left:8px;top:885px;width:382px;height:6px"></div>
<div class="abs" style="left:1905px;top:528px;width:8px;height:364px;background:#21232d"></div>
<div class="sb" style="left:1906px;top:590px;width:6px;height:199px"></div>

<!-- red boxes -->
<div class="redbox" style="left:8px;top:129px;width:256px;height:28.5px"></div>
<div class="redbox" style="left:4px;top:282px;width:1475px;height:21px"></div>
<div class="redbox" style="left:3px;top:526px;width:656px;height:55px"></div>
<div class="redbox" style="left:38px;top:757px;width:896px;height:96px"></div>

<!-- status -->
<div id="status"></div>
<div class="abs" style="left:16.3px;top:897.3px;width:13.4px;height:13.4px;border-radius:50%;background:radial-gradient(circle at 40% 35%,#e6e67a,#c9c94e)"></div>
<svg class="abs" style="left:38px;top:896px" width="16" height="16" viewBox="0 0 16 16">
<path d="M2.2 1.6 H9.4 L12 4.2 V14.8 H2.2 Z" fill="#f0f0ec" stroke="#8a8a86" stroke-width="0.5"/>
<path d="M2.5 1.9 H9.2 L10.8 3.5 V4.6 H2.5 Z" fill="#2e9fe6"/>
<g stroke="#b4b4ac" stroke-width="0.8"><path d="M3 8 H10.6 M3 10 H10.6 M3 12 H10.6"/></g>
<path d="M5.2 9.8 L6 7.6 L12.6 1.4 L14.6 3.2 L7.8 9.4 Z" fill="#3b3d42"/>
<path d="M5.2 9.8 L6 7.6 L7.8 9.4 Z" fill="#d9c08a"/>
</svg>

<div class="st" style="left:70px;letter-spacing:-0.27px">SMB3.1.1 pre-authentication SHA512 hash after hashing the packet (smb2.preauth_hash), 395 byte(s)</div>
<div class="vdot" style="left:1249px"></div><div class="vdot" style="left:1793px"></div>
<div class="st" style="left:1262px;letter-spacing:-0.37px">Packets: 269 · Displayed: 13 (4.8%)</div>
<div class="st" style="left:1807px">Profile: Default</div>
<!-- window corner bits -->
<svg class="abs" style="left:1px;top:36px" width="6" height="6" viewBox="0 0 6 6"><path d="M0 0 H6 Q0 0.5 0 6 Z" fill="#2a6fe0"/></svg>
<svg class="abs" style="left:1912px;top:36px" width="7" height="7" viewBox="0 0 7 7"><path d="M0 0 H7 V7 Q6.5 0.5 0 0 Z" fill="#2a6fe0"/></svg>
<svg class="abs" style="left:1px;top:915px" width="6" height="6" viewBox="0 0 6 6"><path d="M0 0.8 Q1 5 5.2 6 H0 Z" fill="#2a6fe0"/></svg>
<svg class="abs" style="left:1913px;top:915px" width="6" height="6" viewBox="0 0 6 6"><path d="M6 1.8 Q5 5 1.6 6 H6 Z" fill="#2a6fe0"/></svg>
</div></body></html>
